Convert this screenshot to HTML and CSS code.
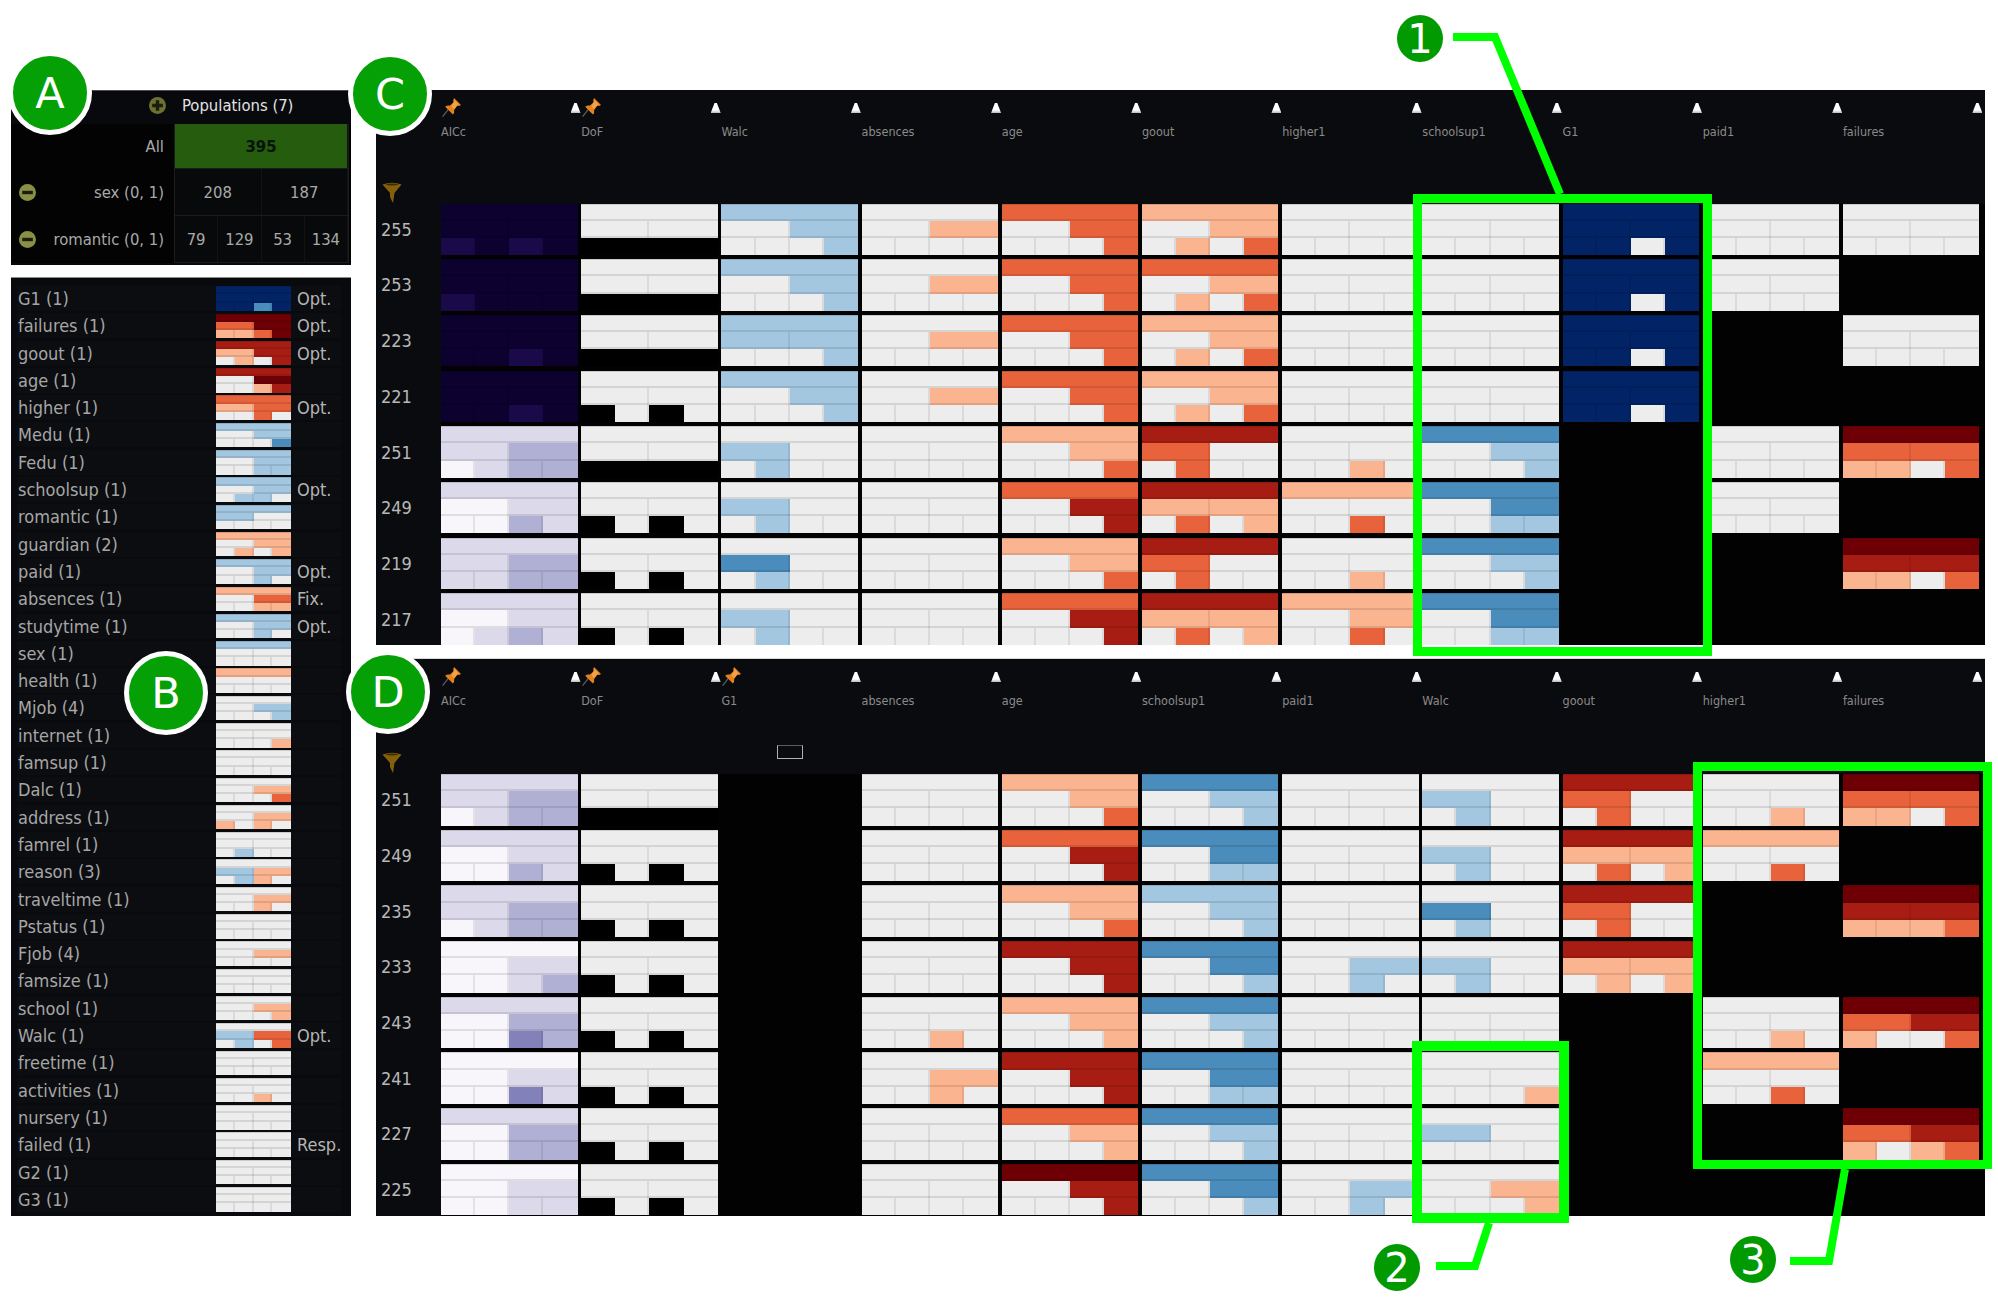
FILE: index.html
```html
<!DOCTYPE html>
<html lang="en">
<head>
<meta charset="utf-8">
<title>Populations and model matrix</title>
<link rel="stylesheet" href="styles.css">
</head>
<body>
<main class="page">
  <div class="side">
    <section class="pops">
      <header class="pops-head">
        <svg class="round-icon" viewBox="0 0 16 16"><circle cx="8" cy="8" r="8" fill="#6d7030"/><path d="M6.400 3h3.200v3.400H13v3.200H9.600V13H6.400V9.600H3V6.400h3.400z" fill="#1c1d0c"/></svg>
        <span class="pops-title">Populations (7)</span>
      </header>
      <div class="pops-row pops-row-all">
        <span class="pops-label">All</span>
        <div class="pops-values"><span class="pop-all">395</span></div>
      </div>
      <div class="pops-row">
        <svg class="round-icon minus" viewBox="0 0 16 16"><circle cx="8" cy="8" r="8" fill="#8a8f45"/><path d="M3 6.400h10v3.200H3z" fill="#1c1d0c"/></svg>
        <span class="pops-label">sex (0, 1)</span>
        <div class="pops-values"><span>208</span><span>187</span></div>
      </div>
      <div class="pops-row">
        <svg class="round-icon minus" viewBox="0 0 16 16"><circle cx="8" cy="8" r="8" fill="#8a8f45"/><path d="M3 6.400h10v3.200H3z" fill="#1c1d0c"/></svg>
        <span class="pops-label">romantic (0, 1)</span>
        <div class="pops-values"><span>79</span><span>129</span><span>53</span><span>134</span></div>
      </div>
    </section>
    <section class="vars" id="vars"></section>
  </div>
  <div class="main">
    <section class="matrix matrix-c" id="matrix-c"></section>
    <section class="matrix matrix-d" id="matrix-d"></section>
  </div>
</main>

<svg class="marks" width="1998" height="1298" viewBox="0 0 1998 1298" fill="none" stroke="#00ff00">
  <rect x="1417.5" y="198.5" width="290" height="453" stroke-width="9"/>
  <rect x="1417" y="1046" width="147" height="172" stroke-width="10"/>
  <rect x="1697.5" y="766.5" width="290" height="398" stroke-width="9"/>
  <polyline points="1453,37 1495,37 1560,194" stroke-width="8"/>
  <polyline points="1489,1223 1475,1266 1436,1266" stroke-width="8"/>
  <polyline points="1845,1169 1829,1261 1790,1261" stroke-width="8"/>
</svg>

<div class="badge badge-a">A</div>
<div class="badge badge-b">B</div>
<div class="badge badge-c">C</div>
<div class="badge badge-d">D</div>
<div class="num num-1">1</div>
<div class="num num-2">2</div>
<div class="num num-3">3</div>

<script src="app.js"></script>
</body>
</html>
```

FILE: styles.css
```css
* { box-sizing: border-box; }
html, body { margin: 0; padding: 0; background: #fff; }
body {
  position: relative;
  width: 1998px;
  height: 1298px;
  overflow: hidden;
  font-family: "DejaVu Sans Condensed", "DejaVu Sans", sans-serif;
}

.page {
  display: grid;
  grid-template-columns: 340px 1609px;
  column-gap: 25px;
  padding: 90px 0 0 11px;
}
.side, .main { display: flex; flex-direction: column; }
.side { gap: 12px; }
.main { gap: 13px; }

/* Populations */
.pops {
  height: 175px;
  background: #08090c;
  border-top: 1px solid #4c4d50;
  color: #a9a9a9;
  font-size: 16.500px;
}
.pops-head {
  height: 33px;
  display: flex;
  align-items: center;
  padding: 0 0 4px 138px;
  gap: 16px;
  color: #e2e2e2;
}
.round-icon { width: 17px; height: 17px; flex: none; }
.pops-title { font-size: 16.500px; }
.pops-row {
  height: 47px;
  display: flex;
  align-items: center;
  padding-left: 8px;
  background: #030303;
}
.pops-row-all { height: 45px; }
.pops-label {
  flex: 1;
  text-align: right;
  padding-right: 10px;
  align-self: center;
}
.pops-values {
  width: 175px;
  height: 100%;
  margin-right: 2px;
  display: flex;
  border: 1px solid #1b1d1d;
  border-width: 0 1px 1px;
  background: #08090a;
}
.pops-values span {
  flex: 1;
  display: flex;
  align-items: center;
  justify-content: center;
  border-right: 1px solid #121414;
}
.pops-values .pop-all {
  background: #255c0d;
  color: #07130a;
  font-weight: 700;
}
.pops-row-all .pops-label { margin-left: 17px; }

/* Variable list */
.vars {
  height: 939px;
  background: #090a0d;
  border-top: 1px solid #8a8a8a;
  padding: 8px 16px 0 6px;
  display: grid;
  grid-auto-rows: 25px;
  row-gap: 2.300px;
  color: #a6a6a6;
  font-size: 18px;
}
.var {
  display: flex;
  align-items: center;
  background: #0c0d10;
  position: relative;
}
.var-name { width: 199px; padding-left: 1px; }
.var-flag { margin-left: 6px; font-size: 18px; color: #b4b4b4; }
.mini { width: 75px; height: 24.500px; flex: none; }

/* Heat cells */
.tree { display: flex; flex-direction: column; min-width: 0; }
.lvl { flex: 1; display: flex; }
.lvl span {
  flex: 1;
  box-shadow: inset 0 -2px 0 rgba(0, 0, 0, .1), inset -2px 0 0 rgba(0, 0, 0, .08);
}
.lvl span:last-child { box-shadow: inset 0 -2px 0 rgba(0, 0, 0, .1); }
.lvl:first-child span { box-shadow: inset 0 1px 0 rgba(0, 0, 0, .14), inset 0 -2px 0 rgba(0, 0, 0, .1); }
.lvl:last-child span { box-shadow: inset -2px 0 0 rgba(0, 0, 0, .08); }
.lvl:last-child span:last-child { box-shadow: none; }
.t-w { background: #ededed; }
.t-k { background: #000; }
.t-a { background: #a3c7e0; }
.t-b { background: #4a8cbc; }
.t-c { background: #022366; }
.t-p { background: #fbb490; }
.t-q { background: #e8623b; }
.t-r { background: #a81d13; }
.t-s { background: #6e0005; }
.t-v { background: #f8f6fb; }
.t-l { background: #dcd9ea; }
.t-m { background: #b0b0d4; }
.t-n { background: #8381b9; }
.t-d { background: #0d0130; }
.t-e { background: #1a0a4a; }

/* Matrices */
.matrix {
  display: grid;
  grid-template-columns: 65px 1fr;
  background: #0a0b0e;
  color: #8a8a8a;
}
.matrix-c { height: 555px; grid-template-rows: 113.500px 1fr; }
.matrix-d { height: 558px; grid-template-rows: 115px 1fr; border-top: 1px solid #d8d8d8; }

.corner { display: flex; align-items: flex-end; padding: 0 0 1px 6px; }
.funnel { width: 20px; height: 21px; }
.heads {
  display: grid;
  grid-template-columns: repeat(11, 136.500px);
  column-gap: 3.700px;
  align-content: start;
  padding-top: 8px;
}
.head { min-width: 0; }
.head-top { height: 18px; display: flex; align-items: flex-start; }
.pin { width: 19px; height: 19px; flex: none; margin-left: 1px; }
.cone {
  width: 10px;
  height: 10px;
  margin: 5px -3px 0 auto;
  background: linear-gradient(#fff 70%, #b8b8b8);
  clip-path: polygon(38% 0, 62% 0, 100% 100%, 0 100%);
}
.head-label {
  margin-top: 9px;
  font-size: 12.500px;
  line-height: 14px;
  white-space: nowrap;
}
.chip {
  width: 26px;
  height: 14px;
  margin: 37px 0 0 56px;
  border: 1px solid #b0b0b0;
  border-top-color: #5c5c5c;
}
.labels {
  display: grid;
  grid-template-rows: repeat(8, 51.500px);
  row-gap: 4.200px;
  align-items: center;
  padding-left: 5px;
  font-size: 18px;
  color: #b8b8b8;
}
.cells {
  background: #020202;
  display: grid;
  grid-auto-flow: column;
  grid-template-columns: repeat(11, 136.500px);
  grid-template-rows: repeat(8, 51.500px);
  column-gap: 3.700px;
  row-gap: 4.200px;
}

/* Annotations laid over the screenshot */
.marks { position: absolute; left: 0; top: 0; }
.badge, .num {
  position: absolute;
  display: flex;
  align-items: center;
  justify-content: center;
  border-radius: 50%;
  color: #fff;
  font-family: "DejaVu Sans", sans-serif;
}
.badge {
  width: 84px;
  height: 84px;
  background: #05a005;
  border: 5px solid #fff;
  font-size: 43px;
  line-height: 1;
}
.badge-a { left: 8px; top: 51px; }
.badge-b { left: 124px; top: 651px; }
.badge-c { left: 348px; top: 52px; }
.badge-d { left: 346px; top: 650px; }
.num {
  width: 46px;
  height: 47px;
  background: #019a01;
  font-size: 40px;
  line-height: 1;
}
.num-1 { left: 1397px; top: 15px; }
.num-2 { left: 1374px; top: 1244px; }
.num-3 { left: 1730px; top: 1236px; }
```

FILE: app.js
```js
var W = 'wwwwwww', E = '', A = 'wwwkkkk', B = 'wwwkwkw';

function tree(code, cls) {
  var el = document.createElement('div');
  el.className = 'tree ' + cls;
  if (!code) return el;
  [code.slice(0, 1), code.slice(1, 3), code.slice(3, 7)].forEach(function (part) {
    var lvl = document.createElement('div');
    lvl.className = 'lvl';
    part.split('').forEach(function (c) {
      var s = document.createElement('span');
      s.className = 't-' + c;
      lvl.appendChild(s);
    });
    el.appendChild(lvl);
  });
  return el;
}

var PIN = '<svg class="pin" viewBox="0 0 15 15"><path d="M5 9 .5 14.700" stroke="#5e5e5e" stroke-width="1"/>' +
  '<path d="M9.500 0 15 5.500 13.500 6.400 12 6.100 9.600 9.400Q10 11.600 8.600 13L2.500 6.900Q4 5.500 6.300 6L9.200 3.300 8.800 1.800z" fill="#e6821c"/>' +
  '<path d="M10 1.800 13 4.800 9.500 8.800 7.500 6.500z" fill="#f2a24a"/></svg>';
var FUNNEL = '<svg class="funnel" viewBox="0 0 20 21"><path d="M.5 2.500Q10-1 19.500 2.500L12.500 11 11 21 8 15V11z" fill="#84600a"/><path d="M3 2.600Q10 .4 17 2.600 10 4.600 3 2.600z" fill="#3a2a05"/></svg>';

function matrix(id, data) {
  var root = document.getElementById(id);
  var html = '<div class="corner">' + FUNNEL + '</div><div class="heads">';
  data.cols.forEach(function (c) {
    html += '<div class="head"><div class="head-top">' + (c.pin ? PIN : '') + '<i class="cone"></i></div>' +
      '<div class="head-label">' + c.name + '</div>' + (c.chip ? '<div class="chip"></div>' : '') + '</div>';
  });
  html += '</div><div class="labels">';
  data.rows.forEach(function (r) { html += '<div>' + r + '</div>'; });
  html += '</div><div class="cells"></div>';
  root.innerHTML = html;
  var cells = root.querySelector('.cells');
  data.cols.forEach(function (c) {
    c.cells.forEach(function (code) { cells.appendChild(tree(code, 'cell')); });
  });
}

matrix('matrix-c', {
  rows: [255, 253, 223, 221, 251, 249, 219, 217],
  cols: [
    { name: 'AICc', pin: 1, cells: ['dddeded', 'dddeddd', 'ddddded', 'ddddded', 'llmvlmm', 'lvlvvml', 'llmllmm', 'lvlvlml'] },
    { name: 'DoF', pin: 1, cells: [A, A, A, B, A, B, B, B] },
    { name: 'Walc', cells: ['awawwwa', 'awawwwa', 'aaawwwa', 'awawwwa', 'wawwaww', 'wawwaww', 'wbwwaww', 'wawwaww'] },
    { name: 'absences', cells: ['wwpwwww', 'wwpwwww', 'wwpwwww', 'wwpwwww', W, W, W, W] },
    { name: 'age', cells: ['qwqwwwq', 'qwqwwwq', 'qwqwwwq', 'qwqwwwq', 'pwpwwwq', 'qwrwwwr', 'pwpwwwq', 'qwrwwwr'] },
    { name: 'goout', cells: ['pwpwpwq', 'qwpwpwq', 'pwpwpwq', 'pwpwpwq', 'rqwwqww', 'rppwqwp', 'rqwwqww', 'rppwqwp'] },
    { name: 'higher1', cells: [W, W, W, W, 'wwwwwpw', 'pwwwwqw', 'wwwwwpw', 'pwpwwqw'] },
    { name: 'schoolsup1', cells: [W, W, W, W, 'bwawwwa', 'bwbwwaa', 'bwawwwa', 'bwbwwaa'] },
    { name: 'G1', cells: ['cccccwc', 'cccccwc', 'cccccwc', 'cccccwc', E, E, E, E] },
    { name: 'paid1', cells: [W, W, E, E, W, W, E, E] },
    { name: 'failures', cells: [W, E, W, E, 'sqqppwq', E, 'srrppwq', E] }
  ]
});

matrix('matrix-d', {
  rows: [251, 249, 235, 233, 243, 241, 227, 225],
  cols: [
    { name: 'AICc', pin: 1, cells: ['llmvlmm', 'lvlvvml', 'llmvlmm', 'vvlvvlm', 'lvmvvnm', 'vvlvvnl', 'lvmvvmm', 'vvlvvll'] },
    { name: 'DoF', pin: 1, cells: [A, B, B, B, B, B, B, B] },
    { name: 'G1', pin: 1, chip: 1, cells: [E, E, E, E, E, E, E, E] },
    { name: 'absences', cells: [W, W, W, W, 'wwwwwpw', 'wwpwwpw', W, W] },
    { name: 'age', cells: ['pwpwwwq', 'qwrwwwr', 'pwpwwwq', 'rwrwwwr', 'pwpwwwp', 'rwrwwwr', 'qwpwwwp', 'swrwwwr'] },
    { name: 'schoolsup1', cells: ['bwawwwa', 'bwbwwaa', 'awawwwa', 'bwbwwwa', 'bwawwwa', 'bwbwwaa', 'bwawwwa', 'bwbwwwa'] },
    { name: 'paid1', cells: [W, W, W, 'wwawwaw', W, W, W, 'wwawwaw'] },
    { name: 'Walc', cells: ['wawwaww', 'wawwaww', 'wbwwaww', 'wawwaww', W, 'wwwwwwp', 'wawwwww', 'wwpwwwp'] },
    { name: 'goout', cells: ['rqwwqww', 'rppwqwp', 'rqwwqww', 'rppwpwp', E, E, E, E] },
    { name: 'higher1', cells: ['wwwwwpw', 'pwwwwqw', E, E, 'wwwwwpw', 'pwwwwqw', E, E] },
    { name: 'failures', cells: ['sqqppwq', E, 'srrpppq', E, 'sqrpwwq', E, 'sqrpwpq', E] }
  ]
});

var VARS = [
  ['G1 (1)', 'cccccbc', 'Opt.'], ['failures (1)', 'sqsppqs', 'Opt.'], ['goout (1)', 'rprwpwr', 'Opt.'],
  ['age (1)', 'rwswwpr'], ['higher (1)', 'qpqwwqw', 'Opt.'], ['Medu (1)', 'awawwwb'], ['Fedu (1)', 'awawwaa'],
  ['schoolsup (1)', 'awawaaw', 'Opt.'], ['romantic (1)', 'aawwwww'], ['guardian (2)', 'pwpwpwp'],
  ['paid (1)', 'awawwaw', 'Opt.'], ['absences (1)', 'pwqwwpp', 'Fix.'], ['studytime (1)', 'awawwaw', 'Opt.'],
  ['sex (1)', 'awwwwww'], ['health (1)', 'pwwwwww'], ['Mjob (4)', 'wwawwwa'], ['internet (1)', 'wwwwwwp'],
  ['famsup (1)', W], ['Dalc (1)', 'wwpwwwq'], ['address (1)', 'wwppwpw'], ['famrel (1)', 'wwwwaww'],
  ['reason (3)', 'wapwapw'], ['traveltime (1)', 'wwpwwpw'], ['Pstatus (1)', W], ['Fjob (4)', 'wwpwwww'],
  ['famsize (1)', W], ['school (1)', 'wwpwwwp'], ['Walc (1)', 'waqwawq', 'Opt.'], ['freetime (1)', W],
  ['activities (1)', 'wwwwwpw'], ['nursery (1)', W], ['failed (1)', W, 'Resp.'], ['G2 (1)', W], ['G3 (1)', W]
];
var vars = document.getElementById('vars');
VARS.forEach(function (v) {
  var row = document.createElement('div');
  row.className = 'var';
  var name = document.createElement('span');
  name.className = 'var-name';
  name.textContent = v[0];
  row.appendChild(name);
  row.appendChild(tree(v[1], 'mini'));
  if (v[2]) {
    var flag = document.createElement('span');
    flag.className = 'var-flag';
    flag.textContent = v[2];
    row.appendChild(flag);
  }
  vars.appendChild(row);
});
```
